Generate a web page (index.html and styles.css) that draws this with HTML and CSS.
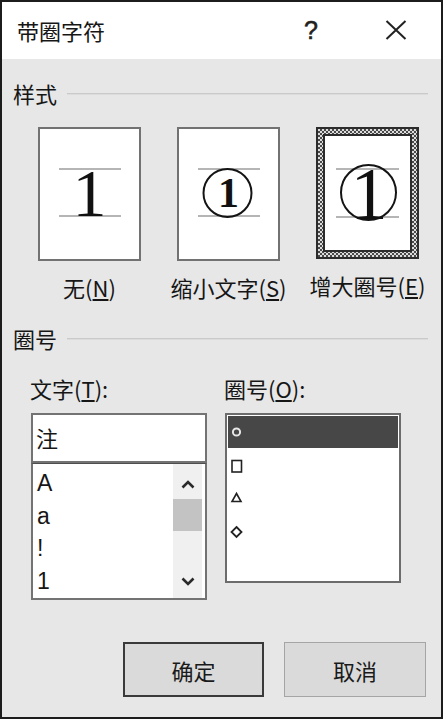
FILE: index.html
```html
<!DOCTYPE html>
<html lang="zh-CN">
<head>
<meta charset="utf-8">
<title>带圈字符</title>
<link rel="stylesheet" href="styles.css">
</head>
<body>
<div class="window">
  <div class="titlebar">
    <span class="title">带圈字符</span>
    <span class="help">?</span>
    <span class="close">
      <svg width="22" height="20" viewBox="0 0 22 20"><path d="M1.5 1 L20.5 19 M20.5 1 L1.5 19" stroke="#222" stroke-width="2" fill="none"/></svg>
    </span>
  </div>
  <div class="content">
    <div class="section-head"><span class="head-text">样式</span><div class="rule"></div></div>
    <div class="styles">
      <div class="style-opt">
        <div class="preview">
          <svg width="99" height="130" viewBox="0 0 99 130">
            <line x1="19" y1="40" x2="81" y2="40" class="guide"/>
            <line x1="19" y1="87" x2="81" y2="87" class="guide"/>
            <text x="49.5" y="87" class="digit" font-size="68">1</text>
          </svg>
        </div>
        <div class="opt-label">无(<u>N</u>)</div>
      </div>
      <div class="style-opt">
        <div class="preview">
          <svg width="99" height="130" viewBox="0 0 99 130">
            <line x1="19" y1="40" x2="81" y2="40" class="guide"/>
            <line x1="19" y1="87" x2="81" y2="87" class="guide"/>
            <circle cx="48.5" cy="64" r="24" class="ring"/>
            <text x="49.5" y="78" class="digit bold" font-size="42">1</text>
          </svg>
        </div>
        <div class="opt-label">缩小文字(<u>S</u>)</div>
      </div>
      <div class="style-opt">
        <div class="preview selected">
          <div class="sel-inner">
            <svg width="81" height="112" viewBox="0 0 81 112">
              <line x1="11" y1="33" x2="74" y2="33" class="guide"/>
              <line x1="11" y1="81" x2="74" y2="81" class="guide"/>
              <circle cx="43.5" cy="56.5" r="27.5" class="ring"/>
              <text x="44" y="83" class="digit" font-size="74">1</text>
            </svg>
          </div>
        </div>
        <div class="opt-label">增大圈号(<u>E</u>)</div>
      </div>
    </div>
    <div class="section-head head2"><span class="head-text">圈号</span><div class="rule"></div></div>
    <div class="pickers">
      <div class="picker">
        <div class="field-label">文字(<u>T</u>):</div>
        <div class="text-input">注</div>
        <div class="char-list">
          <div class="items">
            <div class="item">A</div>
            <div class="item">a</div>
            <div class="item">!</div>
            <div class="item">1</div>
          </div>
          <div class="scrollbar">
            <div class="arrow up"><svg width="14" height="9" viewBox="0 0 14 9"><path d="M1.5 7.5 L7 2 L12.5 7.5" stroke="#2a2a2a" stroke-width="2.6" fill="none"/></svg></div>
            <div class="track"><div class="thumb"></div></div>
            <div class="arrow down"><svg width="14" height="9" viewBox="0 0 14 9"><path d="M1.5 1.5 L7 7 L12.5 1.5" stroke="#2a2a2a" stroke-width="2.6" fill="none"/></svg></div>
          </div>
        </div>
      </div>
      <div class="picker">
        <div class="field-label">圈号(<u>O</u>):</div>
        <div class="enc-list">
          <div class="enc-item selected"><svg width="16" height="32" viewBox="0 0 16 32"><circle cx="6.5" cy="16" r="3.6" stroke="#e6e6e6" stroke-width="2" fill="none"/></svg></div>
          <div class="enc-item"><svg width="16" height="32" viewBox="0 0 16 32"><rect x="2" y="12.5" width="9.5" height="11.5" stroke="#222" stroke-width="1.6" fill="none"/></svg></div>
          <div class="enc-item"><svg width="16" height="32" viewBox="0 0 16 32"><polygon points="2,21.5 11,21.5 6.5,13.5" stroke="#222" stroke-width="1.6" fill="none"/></svg></div>
          <div class="enc-item"><svg width="16" height="32" viewBox="0 0 16 32"><polygon points="6.5,15 11.5,20 6.5,25 1.5,20" stroke="#222" stroke-width="1.8" fill="none"/></svg></div>
        </div>
      </div>
    </div>
    <div class="buttons">
      <button class="btn default">确定</button>
      <button class="btn">取消</button>
    </div>
  </div>
</div>
</body>
</html>
```

FILE: styles.css
```css
* { box-sizing: border-box; margin: 0; padding: 0; }
html, body { width: 443px; height: 719px; overflow: hidden; }
body {
  font-family: "Noto Sans CJK SC", "Liberation Sans", sans-serif;
  color: #161616;
  background: #e7e7e7;
}
.window {
  width: 443px;
  height: 719px;
  border: 2px solid #1c1c1c;
  display: flex;
  flex-direction: column;
  background: #e7e7e7;
}
.titlebar {
  height: 57px;
  flex-shrink: 0;
  background: #fff;
  display: flex;
  align-items: center;
  padding: 0 22px 2px 15px;
}
.title { flex: 1; font-size: 22px; line-height: 30px; }
.help {
  width: 46px;
  margin-right: 39px;
  text-align: center;
  font-family: "Liberation Sans", sans-serif;
  font-size: 25px;
  line-height: 30px;
  color: #222;
  -webkit-text-stroke: 0.6px #222;
}
.close { width: 46px; display: flex; justify-content: center; align-items: center; }

.content { flex: 1; padding: 0 13px 0 11px; display: flex; flex-direction: column; }

.section-head { display: flex; align-items: center; margin-top: 19px; height: 30px; }
.head2 { margin-top: 21px; }
.head-text { font-size: 22px; line-height: 30px; margin-right: 10px; }
.rule { flex: 1; height: 2px; border-top: 1px solid #cacaca; border-bottom: 1px solid #dcdcdc; margin-top: 1px; }

.styles { display: flex; gap: 36px; margin-top: 19px; padding-left: 25px; }
.style-opt { width: 103px; display: flex; flex-direction: column; align-items: center; }
.preview {
  width: 103px;
  height: 134px;
  border: 2px solid #727272;
  background: #fff;
}
.preview svg { display: block; }
.preview.selected {
  border: 2px solid #2c2c2c;
  padding: 5px;
  background: repeating-conic-gradient(#4a4a4a 0 25%, #dcdcdc 0 50%) 0 0 / 4px 4px;
  height: 132px;
}
.sel-inner { width: 100%; height: 100%; border: 2px solid #2c2c2c; background: #fff; }
.guide { stroke: #9c9c9c; stroke-width: 1.5; }
.ring { stroke: #141414; stroke-width: 2; fill: none; }
.digit { font-family: "Liberation Serif", serif; text-anchor: middle; fill: #111; }
.digit.bold { font-weight: bold; }
.opt-label {
  margin-top: 11px;
  font-size: 22px;
  line-height: 30px;
  white-space: nowrap;
  display: flex;
  justify-content: center;
  width: 103px;
}
u { text-decoration: underline; text-decoration-thickness: 1.5px; text-underline-offset: 2px; }

.pickers { display: flex; gap: 18px; margin-top: 20px; padding-left: 18px; align-items: flex-start; }
.picker { width: 176px; display: flex; flex-direction: column; }
.field-label { font-size: 22px; line-height: 30px; margin-left: -1px; }
.text-input {
  margin-top: 10px;
  height: 50px;
  border: 2px solid #737373;
  background: #fff;
  font-size: 22px;
  line-height: 44px;
  padding-left: 3px;
}
.char-list {
  height: 137px;
  border: 2px solid #737373;
  border-top: 1px solid #4e4e4e;
  background: #fff;
  display: flex;
}
.items { flex: 1; padding: 3px 0 0 4px; font-family: "Liberation Sans", sans-serif; font-size: 23px; }
.item { line-height: 32.5px; height: 32.5px; }
.scrollbar { width: 29px; margin-right: 3px; background: #f0f0f0; display: flex; flex-direction: column; }
.arrow { display: flex; justify-content: center; align-items: center; }
.arrow svg { display: block; }
.arrow.up { height: 35px; padding-top: 6px; }
.arrow.down { height: 33px; }
.track { flex: 1; }
.thumb { height: 32px; background: #c3c3c3; }

.enc-list {
  margin-top: 10px;
  height: 170px;
  border: 2px solid #6c6c6c;
  background: #fff;
  padding: 1px;
}
.enc-item { height: 32px; padding-left: 2px; display: flex; align-items: center; }
.enc-item svg { display: block; }
.enc-item.selected { background: #474747; }

.buttons { display: flex; justify-content: flex-end; gap: 20px; margin-top: 42px; margin-right: 2px; }
.btn {
  width: 141px;
  height: 55px;
  background: #dadada;
  border: 1.5px solid #a5a5a5;
  font-family: "Noto Sans CJK SC", sans-serif;
  font-size: 22px;
  color: #1a1a1a;
}
.btn + .btn { width: 142px; }
.btn.default { border: 2px solid #3a3a3a; }
```
